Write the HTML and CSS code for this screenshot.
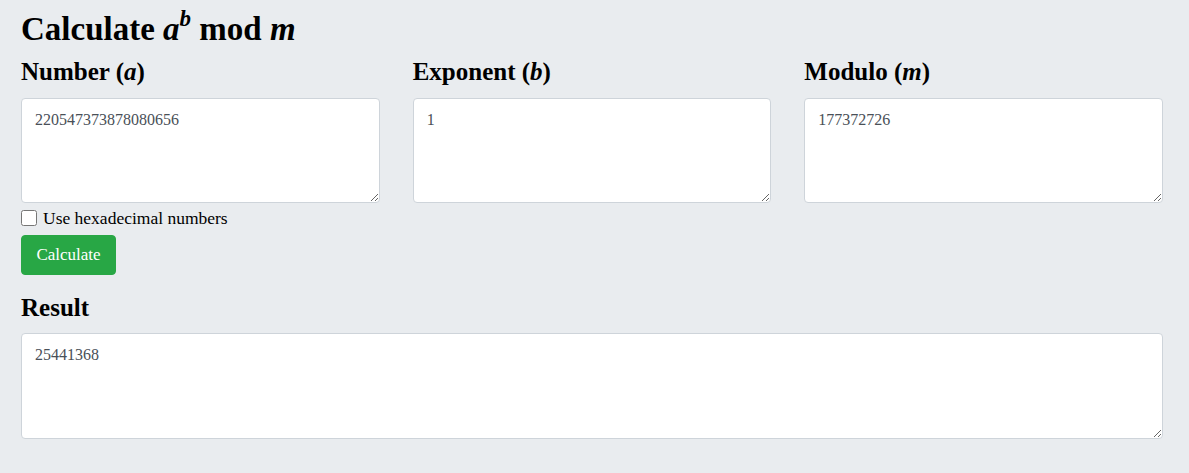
FILE: index.html
```html
<!DOCTYPE html>
<html>
<head>
<meta charset="utf-8">
<link rel="stylesheet" href="styles.css">
</head>
<body>
<main class="page">
  <h1 class="title">Calculate <i>a</i><sup class="sup"><i>b</i></sup> mod <i>m</i></h1>
  <div class="inputs">
    <div class="field">
      <label class="label">Number (<i>a</i>)</label>
      <textarea class="box">220547373878080656</textarea>
    </div>
    <div class="field">
      <label class="label">Exponent (<i>b</i>)</label>
      <textarea class="box">1</textarea>
    </div>
    <div class="field">
      <label class="label">Modulo (<i>m</i>)</label>
      <textarea class="box">177372726</textarea>
    </div>
  </div>
  <label class="check"><input type="checkbox" class="checkbox"> Use hexadecimal numbers</label>
  <div><button class="btn">Calculate</button></div>
  <h2 class="label result-label">Result</h2>
  <textarea class="box result">25441368</textarea>
</main>
</body>
</html>
```
FILE: styles.css
```css
html, body {
  margin: 0;
  background: #e9ecef;
}
body {
  font-family: "Liberation Serif", "DejaVu Serif", serif;
  color: #212529;
}
.page {
  padding: 8px 26px 20px 21px;
  display: flex;
  flex-direction: column;
}
.title {
  margin: 0;
  font-size: 33px;
  line-height: 42px;
  font-weight: bold;
  color: #000;
}
.sup {
  font-size: 23px;
  line-height: 0;
  vertical-align: 14px;
}
.inputs {
  display: grid;
  grid-template-columns: 1fr 1fr 1fr;
  column-gap: 33px;
  margin-top: 6px;
}
.field {
  display: flex;
  flex-direction: column;
}
.label {
  display: block;
  margin: 0;
  font-size: 25px;
  line-height: 32px;
  font-weight: bold;
  color: #000;
  margin-bottom: 10px;
}
.box {
  box-sizing: border-box;
  height: 105px;
  width: 100%;
  border: 1px solid #ced4da;
  border-radius: 4px;
  background: #fff;
  padding: 10px 13px;
  font-family: "Liberation Serif", "DejaVu Serif", serif;
  font-size: 16px;
  line-height: 22px;
  color: #495057;
  resize: vertical;
  margin: 0;
}
.check {
  display: flex;
  align-items: center;
  gap: 6px;
  margin-top: 6px;
  font-size: 17.5px;
  line-height: 18px;
  color: #000;
}
.checkbox {
  margin: 0;
  width: 16px;
  height: 16px;
}
.btn {
  margin-top: 8px;
  height: 40px;
  width: 95px;
  padding: 0;
  background: #28a745;
  border: 1px solid #28a745;
  border-radius: 4px;
  color: #fff;
  font-family: "Liberation Serif", "DejaVu Serif", serif;
  font-size: 17px;
}
.result-label {
  margin-top: 17px;
  margin-bottom: 9px;
}
.result {
  width: 100%;
  height: 106px;
}
```
